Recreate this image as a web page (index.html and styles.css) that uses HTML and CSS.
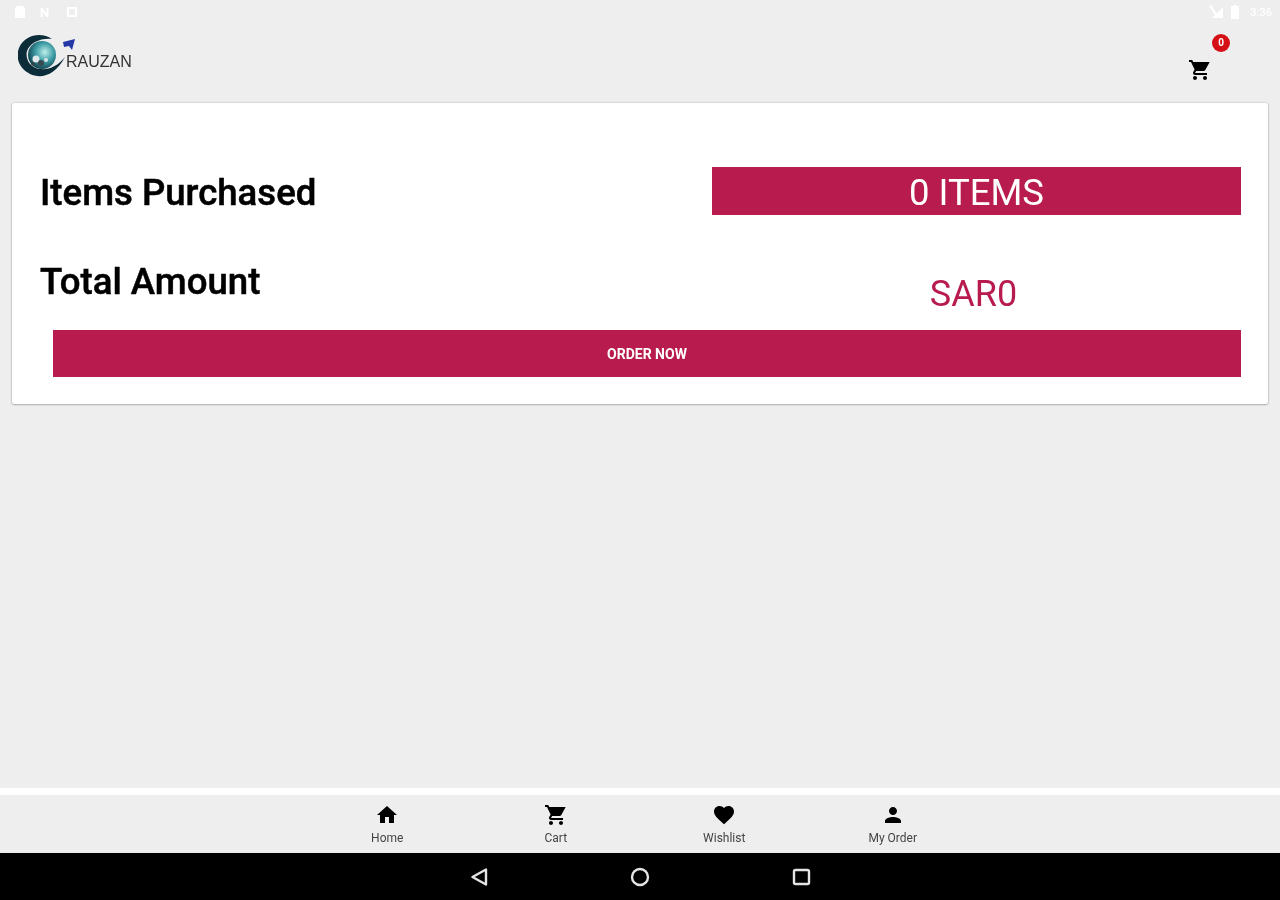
FILE: index.html
```html
<!DOCTYPE html>
<html lang="en">
<head>
<meta charset="utf-8">
<title>Rauzan</title>
<link rel="stylesheet" href="styles.css">
</head>
<body>
<div class="screen">
  <div class="status">
    <div class="status-group">
      <svg class="status-icon" viewBox="0 0 12 14"><path d="M3 1h6l2 2v10H1V3z"/></svg>
      <span class="status-n">N</span>
      <svg class="status-icon" viewBox="0 0 12 14"><path fill-rule="evenodd" d="M1 2h10v10H1zM3 4v6h6V4z"/></svg>
    </div>
    <div class="status-group status-right">
      <svg class="status-signal" viewBox="0 0 16 14"><path d="M15 2v11H4z"/><path d="M1 1l2-1 8 12-2 1z"/></svg>
      <svg class="status-battery" viewBox="0 0 8 14"><path d="M2.500 0h3v1H8v13H0V1h2.500z"/></svg>
      <span class="status-time">3:36</span>
    </div>
  </div>

  <header class="appbar">
    <div class="logo">
      <svg class="logo-mark" viewBox="0 0 58 44">
        <defs>
          <radialGradient id="globe" cx="0.6" cy="0.4" r="0.65">
            <stop offset="0" stop-color="#bfeeea"/>
            <stop offset="0.5" stop-color="#3f9ea6"/>
            <stop offset="1" stop-color="#0f3d4c"/>
          </radialGradient>
        </defs>
        <circle cx="24" cy="20" r="14" fill="url(#globe)"/>
        <path d="M34 4C24-3 7-1 1 13c-4 11 1 21 11 26 11 5 25 2 35-17-7 9-16 13-25 12C12 33 7 24 9 16 12 8 22 3 34 4z" fill="#0c2c3a"/>
        <circle cx="18" cy="24" r="3.500" fill="#dfe9e9"/>
        <circle cx="23" cy="28" r="3" fill="#3a4a52"/>
        <circle cx="28" cy="25" r="2" fill="#d8e4e4"/>
        <circle cx="15" cy="29" r="1.800" fill="#33434b"/>
        <path d="M45 7l12-3-3 11-3-4-5 1z" fill="#2438a8"/>
      </svg>
      <span class="logo-text">RAUZAN</span>
    </div>
    <div class="cart">
      <svg class="cart-icon" viewBox="0 0 24 24"><path d="M7 18c-1.100 0-1.990.900-1.990 2S5.900 22 7 22s2-.900 2-2-.900-2-2-2zM1 2v2h2l3.600 7.590-1.350 2.450c-.160.280-.250.610-.250.960 0 1.100.900 2 2 2h12v-2H7.420c-.140 0-.250-.110-.250-.250l.030-.120.900-1.630h7.450c.750 0 1.410-.410 1.750-1.030L21.700 4H5.210l-.940-2H1zm16 16c-1.100 0-1.990.900-1.990 2s.890 2 1.990 2 2-.900 2-2-.900-2-2-2z"/></svg>
      <span class="badge">0</span>
    </div>
  </header>

  <section class="card">
    <div class="row">
      <h2 class="label">Items Purchased</h2>
      <div class="items">0 ITEMS</div>
    </div>
    <div class="row row-total">
      <h2 class="label">Total Amount</h2>
      <div class="amount">SAR0</div>
    </div>
    <button class="order" type="button">ORDER NOW</button>
  </section>

  <div class="spacer"></div>

  <nav class="tabs">
    <a class="tab">
      <svg class="tab-icon" viewBox="0 0 24 24"><path d="M10 20v-6h4v6h5v-8h3L12 3 2 12h3v8z"/></svg>
      <span class="tab-label">Home</span>
    </a>
    <a class="tab">
      <svg class="tab-icon" viewBox="0 0 24 24"><path d="M7 18c-1.100 0-1.990.900-1.990 2S5.900 22 7 22s2-.900 2-2-.900-2-2-2zM1 2v2h2l3.600 7.590-1.350 2.450c-.160.280-.250.610-.250.960 0 1.100.900 2 2 2h12v-2H7.420c-.140 0-.250-.110-.250-.250l.030-.120.900-1.630h7.450c.750 0 1.410-.410 1.750-1.030L21.700 4H5.210l-.940-2H1zm16 16c-1.100 0-1.990.900-1.990 2s.890 2 1.990 2 2-.900 2-2-.900-2-2-2z"/></svg>
      <span class="tab-label">Cart</span>
    </a>
    <a class="tab">
      <svg class="tab-icon" viewBox="0 0 24 24"><path d="M12 21.350l-1.450-1.320C5.400 15.360 2 12.280 2 8.500 2 5.420 4.420 3 7.500 3c1.740 0 3.410.810 4.500 2.090C13.090 3.810 14.760 3 16.500 3 19.580 3 22 5.420 22 8.500c0 3.780-3.400 6.860-8.550 11.540L12 21.350z"/></svg>
      <span class="tab-label">Wishlist</span>
    </a>
    <a class="tab">
      <svg class="tab-icon" viewBox="0 0 24 24"><path d="M12 12c2.210 0 4-1.790 4-4s-1.790-4-4-4-4 1.790-4 4 1.790 4 4 4zm0 2c-2.670 0-8 1.340-8 4v2h16v-2c0-2.660-5.330-4-8-4z"/></svg>
      <span class="tab-label">My Order</span>
    </a>
  </nav>

  <div class="sysnav">
    <svg class="sys-icon" viewBox="0 0 20 20"><path d="M17 2.500v15L3.500 10z" fill="none" stroke="#e4e4e4" stroke-width="2.400" stroke-linejoin="round"/></svg>
    <svg class="sys-icon" viewBox="0 0 20 20"><circle cx="10" cy="10" r="8" fill="none" stroke="#e4e4e4" stroke-width="2.400"/></svg>
    <svg class="sys-icon" viewBox="0 0 20 20"><rect x="3" y="3" width="15" height="14" rx="1.500" fill="none" stroke="#e4e4e4" stroke-width="2.400"/></svg>
  </div>
</div>
</body>
</html>
```
FILE: styles.css
```css
* { box-sizing: border-box; }
html, body { margin: 0; padding: 0; background: #eeeeee; }
body { font-family: Roboto, "Liberation Sans", sans-serif; color: #111; }

.screen {
  width: 1280px;
  height: 900px;
  display: flex;
  flex-direction: column;
  background: #eeeeee;
  overflow: hidden;
  filter: blur(0.7px);
}

.status {
  height: 24px;
  display: flex;
  align-items: center;
  justify-content: space-between;
  padding: 0 8px 0 14px;
  color: #fff;
}
.status-group { display: flex; align-items: center; gap: 14px; }
.status-right { gap: 7px; }
.status-icon { width: 12px; height: 14px; fill: #fff; }
.status-n { font-size: 13px; font-weight: 700; width: 12px; }
.status-signal { width: 16px; height: 14px; fill: #fff; }
.status-battery { width: 8px; height: 14px; fill: #fff; margin-right: 4px; }
.status-time { font-size: 11px; font-weight: 500; }

.appbar {
  height: 79px;
  display: flex;
  align-items: flex-start;
  justify-content: space-between;
  padding: 11px 68px 0 18px;
}
.logo { display: flex; align-items: flex-start; }
.logo-mark { width: 58px; height: 44px; display: block; }
.logo-text {
  font-family: "Liberation Sans", sans-serif;
  font-size: 16px;
  color: #333;
  margin: 18px 0 0 -10px;
  line-height: 18px;
}

.cart { position: relative; width: 24px; height: 24px; margin-top: 23px; }
.cart-icon { width: 24px; height: 24px; display: block; fill: #000; }
.badge {
  position: absolute;
  left: 24px;
  top: -24px;
  width: 18px;
  height: 18px;
  border-radius: 50%;
  background: #d50f16;
  color: #fff;
  font-size: 10px;
  font-weight: 700;
  line-height: 18px;
  text-align: center;
}

.card {
  margin: 0 12px;
  height: 301px;
  padding: 64px 27px 26px 28px;
  background: #fff;
  border-radius: 2px;
  box-shadow: 0 0 2px rgba(0,0,0,0.3), 0 1px 2px rgba(0,0,0,0.2);
  display: flex;
  flex-direction: column;
}
.row { display: flex; justify-content: space-between; align-items: center; }
.row-total { align-items: flex-start; height: 115px; }
.label {
  margin: 3px 0 0;
  font-size: 36.600px;
  font-weight: 500;
  line-height: 40px;
  color: #000;
  -webkit-text-stroke: 0.5px #000;
}
.row-total .label { margin-top: 47px; }
.items {
  width: 529px;
  height: 48px;
  background: #b81c4e;
  color: #fff;
  font-size: 36.500px;
  line-height: 51px;
  text-align: center;
}
.amount {
  width: 529px;
  margin-top: 59px;
  padding-right: 6px;
  font-size: 36px;
  line-height: 40px;
  color: #b81c4e;
  text-align: center;
}
.order {
  margin: 0 0 0 13px;
  height: 47px;
  border: 0;
  padding: 0;
  background: #b81c4e;
  color: #fff;
  font-family: inherit;
  font-size: 14px;
  font-weight: 700;
  letter-spacing: 0;
}

.spacer { flex: 1; }

.tabs {
  height: 65px;
  border-top: 7px solid #fff;
  display: flex;
  justify-content: center;
  background: #eeeeee;
}
.tab {
  width: 168.500px;
  display: flex;
  flex-direction: column;
  align-items: center;
  padding-top: 8px;
}
.tab-icon { width: 24px; height: 24px; display: block; fill: #000; }
.tab-label { font-size: 12px; line-height: 14px; margin-top: 4px; color: #444; }

.sysnav {
  height: 47px;
  background: #000;
  display: flex;
  align-items: center;
  justify-content: center;
  gap: 141px;
}
.sys-icon { width: 20px; height: 20px; display: block; }
```
